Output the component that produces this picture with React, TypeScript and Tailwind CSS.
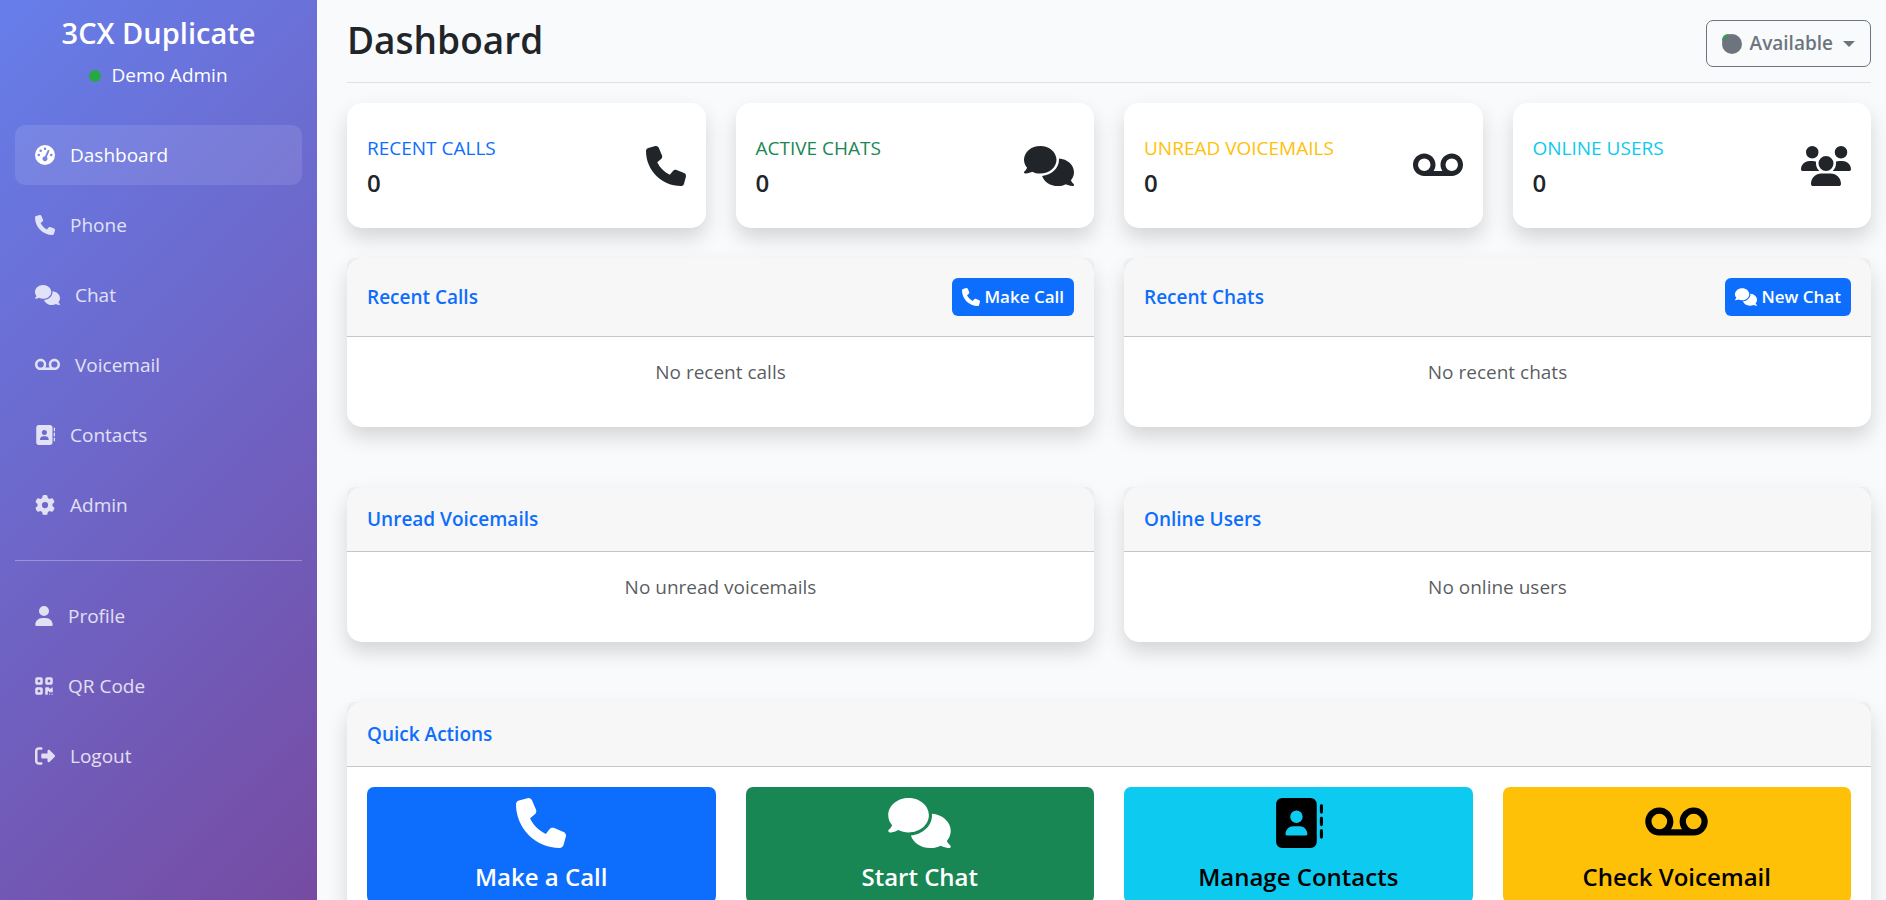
import React from 'react';
import type { IconType } from 'react-icons';
import {
  FaAddressBook,
  FaCircle,
  FaComments,
  FaGaugeHigh,
  FaGear,
  FaPhone,
  FaQrcode,
  FaRightFromBracket,
  FaUser,
  FaUsers,
  FaVoicemail,
} from 'react-icons/fa6';

type NavItem = { label: string; icon: IconType; iconClass: string; active?: boolean };

const mainNav: NavItem[] = [
  { label: 'Dashboard', icon: FaGaugeHigh, iconClass: 'w-5', active: true },
  { label: 'Phone', icon: FaPhone, iconClass: 'w-5' },
  { label: 'Chat', icon: FaComments, iconClass: 'w-[25px]' },
  { label: 'Voicemail', icon: FaVoicemail, iconClass: 'w-[25px]' },
  { label: 'Contacts', icon: FaAddressBook, iconClass: 'w-5' },
  { label: 'Admin', icon: FaGear, iconClass: 'w-5' },
];

const accountNav: NavItem[] = [
  { label: 'Profile', icon: FaUser, iconClass: 'w-[18px]' },
  { label: 'QR Code', icon: FaQrcode, iconClass: 'w-[18px]' },
  { label: 'Logout', icon: FaRightFromBracket, iconClass: 'w-5' },
];

const stats = [
  { label: 'Recent Calls', value: 0, color: 'text-[#0d6efd]', icon: FaPhone, iconClass: 'w-10' },
  { label: 'Active Chats', value: 0, color: 'text-[#198754]', icon: FaComments, iconClass: 'w-[50px]' },
  { label: 'Unread Voicemails', value: 0, color: 'text-[#ffc107]', icon: FaVoicemail, iconClass: 'w-[50px]' },
  { label: 'Online Users', value: 0, color: 'text-[#0dcaf0]', icon: FaUsers, iconClass: 'w-[50px]' },
];

const actions = [
  { label: 'Make a Call', icon: FaPhone, iconClass: 'w-[50px]', color: 'bg-[#0d6efd] text-white' },
  { label: 'Start Chat', icon: FaComments, iconClass: 'w-[63px]', color: 'bg-[#198754] text-white' },
  { label: 'Manage Contacts', icon: FaAddressBook, iconClass: 'w-[50px]', color: 'bg-[#0dcaf0] text-black' },
  { label: 'Check Voicemail', icon: FaVoicemail, iconClass: 'w-[63px]', color: 'bg-[#ffc107] text-black' },
];

const NavList = ({ items }: { items: NavItem[] }) => (
  <ul className="flex flex-col gap-2.5">
    {items.map(({ label, icon: Icon, iconClass, active }) => (
      <li key={label}>
        <a
          href="#"
          className={`flex h-[60px] items-center gap-[15px] rounded-[10px] px-5 hover:bg-white/10 hover:text-white ${
            active ? 'bg-white/10 text-white' : 'text-white/80'
          }`}
        >
          <Icon className={`h-5 shrink-0 ${iconClass}`} />
          {label}
        </a>
      </li>
    ))}
  </ul>
);

const Sidebar = () => (
  <aside className="sticky top-0 h-screen w-[317px] shrink-0 overflow-hidden bg-[linear-gradient(135deg,#667eea_0%,#764ba2_100%)] px-[15px] pt-[15px]">
    <div className="mb-[35px] flex flex-col items-center text-white">
      <h4 className="mb-[10px] text-[29px] leading-[36px] font-semibold">3CX Duplicate</h4>
      <div className="flex items-center gap-[10px] leading-[29px]">
        <span className="size-3 rounded-full bg-[#28a745]" />
        Demo Admin
      </div>
    </div>
    <nav>
      <NavList items={mainNav} />
      <hr className="my-[25px] border-white/30" />
      <NavList items={accountNav} />
    </nav>
  </aside>
);

type PanelProps = { title: string; action?: React.ReactNode; children: React.ReactNode };

const Panel = ({ title, action, children }: PanelProps) => (
  <section className="rounded-[15px] bg-white shadow-[0_10px_20px_rgba(0,0,0,0.15)]">
    <div className="flex items-center justify-between rounded-t-[7px] border-b border-black/20 bg-black/3 p-5">
      <h6 className="leading-6 font-semibold text-[#0d6efd]">{title}</h6>
      {action}
    </div>
    <div className="p-5">{children}</div>
  </section>
);

const EmptyText = ({ children }: { children: React.ReactNode }) => (
  <p className="mb-5 text-center leading-[30px] text-[#212529]/75">{children}</p>
);

type SmallButtonProps = { icon: IconType; iconClass: string; label: string };

const SmallButton = ({ icon: Icon, iconClass, label }: SmallButtonProps) => (
  <button
    type="button"
    className="flex h-[38px] items-center gap-1 rounded-md bg-[#0d6efd] px-2.5 text-[17px] font-semibold text-white hover:bg-[#0b5ed7]"
  >
    <Icon className={`h-[18px] ${iconClass}`} />
    {label}
  </button>
);

const App = () => {
  return (
    <div className="flex min-h-screen items-start bg-[#f8fafc] font-['Open_Sans',sans-serif] text-[19px] text-[#212529]">
      <Sidebar />

      <main className="min-w-0 flex-1 pr-[15px] pb-[30px] pl-[30px]">
        {/* Page header */}
        <div className="mb-5 flex items-start justify-between border-b border-[#dee2e6] pt-5 pb-[15px]">
          <h1 className="h-[47px] text-[37px] leading-[40px] font-semibold">Dashboard</h1>
          <button
            type="button"
            className="flex h-[47px] items-center rounded-[7px] border border-[#6c757d] px-[15px] font-semibold text-[#6c757d]"
          >
            <span className="relative mr-2 size-5">
              <span className="absolute top-0 left-0 size-3 rounded-full bg-[#28a745]" />
              <FaCircle className="absolute inset-0 size-5" />
            </span>
            Available
            <span className="ml-[10px] border-x-[6px] border-t-[6px] border-x-transparent border-t-[#6c757d]" />
          </button>
        </div>

        {/* Stat cards */}
        <div className="mb-[30px] grid grid-cols-4 gap-[30px]">
          {stats.map(({ label, value, color, icon: Icon, iconClass }) => (
            <div
              key={label}
              className="flex items-center justify-between rounded-[15px] bg-white px-5 py-[30px] shadow-[0_10px_20px_rgba(0,0,0,0.15)]"
            >
              <div>
                <div className={`mb-[5px] leading-[30px] uppercase ${color}`}>{label}</div>
                <div className="text-2xl leading-[30px] font-semibold">{value}</div>
              </div>
              <Icon className={`h-10 ${iconClass}`} />
            </div>
          ))}
        </div>

        {/* Activity panels */}
        <div className="mb-[60px] grid grid-cols-2 gap-x-[30px] gap-y-[60px]">
          <Panel
            title="Recent Calls"
            action={<SmallButton icon={FaPhone} iconClass="w-[18px]" label="Make Call" />}
          >
            <EmptyText>No recent calls</EmptyText>
          </Panel>
          <Panel
            title="Recent Chats"
            action={<SmallButton icon={FaComments} iconClass="w-[22px]" label="New Chat" />}
          >
            <EmptyText>No recent chats</EmptyText>
          </Panel>
          <Panel title="Unread Voicemails">
            <EmptyText>No unread voicemails</EmptyText>
          </Panel>
          <Panel title="Online Users">
            <EmptyText>No online users</EmptyText>
          </Panel>
        </div>

        {/* Quick actions */}
        <Panel title="Quick Actions">
          <div className="grid grid-cols-4 gap-[30px]">
            {actions.map(({ label, icon: Icon, iconClass, color }) => (
              <button
                key={label}
                type="button"
                className={`flex flex-col items-center gap-3.5 rounded-[7px] px-4 py-[11px] text-2xl leading-[30px] font-semibold ${color}`}
              >
                <Icon className={`h-[50px] ${iconClass}`} />
                {label}
              </button>
            ))}
          </div>
        </Panel>
      </main>
    </div>
  );
};

export default App;
